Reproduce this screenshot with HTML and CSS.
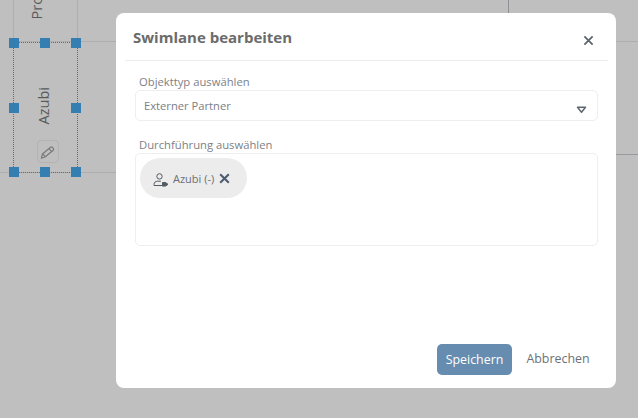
FILE: index.html
```html
<!DOCTYPE html>
<html lang="de">
<head>
<meta charset="utf-8">
<title>Swimlane bearbeiten</title>
<link rel="stylesheet" href="styles.css">
</head>
<body>
<div class="canvas">
  <div class="line v l1"></div>
  <div class="line v l2"></div>
  <div class="line v l3"></div>
  <div class="line h h1"></div>
  <div class="line h h2"></div>
  <div class="line h h3"></div>
  <div class="line h h4"></div>
  <div class="lane-label pro">Pro</div>
  <div class="selection"></div>
  <div class="lane-label azubi">Azubi</div>
  <div class="edit-btn">
    <svg width="16" height="16" viewBox="0 0 16 16" fill="none" stroke="#7a7a7a" stroke-width="1.2" stroke-linejoin="round"><path d="M2.5 10 10.5 3.2a1.3 1.3 0 0 1 1.8 0l1 1.2a1.3 1.3 0 0 1-.1 1.8L5 13l-3.6 1.2z"/><path d="M9 4.6 11.8 7.6M3 10.2l2.4 2.6"/></svg>
  </div>
  <span class="handle a1"></span><span class="handle a2"></span><span class="handle a3"></span>
  <span class="handle b1"></span><span class="handle b3"></span>
  <span class="handle c1"></span><span class="handle c2"></span><span class="handle c3"></span>
</div>
<div class="modal">
  <header class="modal-head">
    <h1 class="title">Swimlane bearbeiten</h1>
    <svg class="close" width="11" height="11" viewBox="0 0 12 12" stroke="#5f6670" stroke-width="2"><path d="M1.5 1.5 10.5 10.5M10.5 1.5 1.5 10.5"/></svg>
  </header>
  <div class="modal-body">
    <div class="field">
      <label class="label">Objekttyp auswählen</label>
      <div class="select">
        <span>Externer Partner</span>
        <span class="select-arrow">
          <svg width="11" height="8" viewBox="0 0 12 9" fill="none" stroke="#5f6670" stroke-width="1.7" stroke-linejoin="round"><path d="M1.5 1.5h9L6 7z"/></svg>
        </span>
      </div>
    </div>
    <div class="field second">
      <label class="label">Durchführung auswählen</label>
      <div class="multi">
        <div class="chip">
          <svg class="chip-icon" width="16" height="15" viewBox="0 0 16 15" fill="none" stroke="#555b63" stroke-width="1"><circle cx="6.5" cy="4.4" r="2.7"/><path d="M1 13.5v-1C1 10.4 2.6 9.2 4.5 9.2h3.4"/><path d="M1 13.5h8"/><path d="M9.5 10.5h3l2.5 1.8-2.5 1.8h-3z" fill="#555b63"/></svg>
          <span class="chip-text">Azubi (-)</span>
          <svg class="chip-x" width="11" height="11" viewBox="0 0 11 11" stroke="#4f5d70" stroke-width="2.1"><path d="M1.2 1.2 9.8 9.8M9.8 1.2 1.2 9.8"/></svg>
        </div>
      </div>
    </div>
  </div>
  <footer class="modal-foot">
    <button class="btn primary">Speichern</button>
    <button class="btn plain">Abbrechen</button>
  </footer>
</div>
</body>
</html>
```
FILE: styles.css
```css
* { box-sizing: border-box; }
html, body { margin: 0; height: 100%; }
body {
  width: 638px;
  height: 418px;
  overflow: hidden;
  background: #bfbfbf;
  font-family: "Open Sans", sans-serif;
  position: relative;
  display: flex;
  align-items: flex-start;
  justify-content: flex-start;
  padding: 13px 0 0 116px;
}
.canvas { position: absolute; inset: 0; }
.line { position: absolute; background: #aeaeae; }
.line.v { width: 1px; }
.line.h { height: 1px; }
.l1 { left: 13px; top: 0; height: 42px; }
.l2 { left: 77px; top: 0; height: 42px; }
.l3 { left: 508px; top: 0; height: 13px; width: 1px; background: #8e9296; }
.h1 { left: 14px; top: 41px; width: 102px; }
.h2 { left: 0; top: 172px; width: 116px; }
.h3 { left: 616px; top: 41px; width: 22px; }
.h4 { left: 616px; top: 154px; width: 22px; background: #969a9e; }
.lane-label {
  position: absolute;
  writing-mode: vertical-rl;
  transform: rotate(180deg);
  font-size: 14.5px;
  line-height: 16px;
  color: #5a5a5a;
  white-space: nowrap;
}
.pro { left: 29px; bottom: 399px; }
.azubi { left: 36px; top: 87px; }
.selection {
  position: absolute;
  left: 13px;
  top: 42px;
  width: 65px;
  height: 131px;
  border: 1px dotted #6a6a6a;
}
.edit-btn {
  position: absolute;
  left: 37px;
  top: 140px;
  width: 22px;
  height: 23px;
  border: 1px solid #b3b3b3;
  border-radius: 4px;
  display: flex;
  align-items: center;
  justify-content: center;
}
.handle { position: absolute; width: 10px; height: 10px; background: #357eb2; }
.a1, .b1, .c1 { left: 9px; }
.a2, .c2 { left: 40px; }
.a3, .b3, .c3 { left: 71px; }
.a1, .a2, .a3 { top: 38px; }
.b1, .b3 { top: 103px; }
.c1, .c2, .c3 { top: 167px; }

.modal {
  position: relative;
  width: 500px;
  height: 375px;
  background: #fff;
  border-radius: 8px;
  display: flex;
  flex-direction: column;
  color: #6c7178;
}
.modal-head {
  height: 48px;
  margin: 0 8px 0 9px;
  padding: 0 8px;
  border-bottom: 1px solid #ececec;
  display: flex;
  align-items: center;
  justify-content: space-between;
}
.title {
  margin: 0;
  font-size: 15px;
  font-weight: 700;
  line-height: 20px;
  color: #6b6b6b;
}
.close { position: relative; top: 4px; left: -6px; }
.modal-body {
  flex: 1;
  padding: 12px 18px 0 19px;
  display: flex;
  flex-direction: column;
}
.label {
  display: block;
  font-size: 11.25px;
  line-height: 17px;
  padding-left: 4px;
  color: #7d8187;
}
.select {
  height: 31px;
  border: 1px solid #eeeeee;
  border-radius: 5px;
  display: flex;
  align-items: center;
  justify-content: space-between;
  padding-left: 8px;
  font-size: 11.2px;
  color: #7a7e84;
}
.select-arrow {
  width: 31px;
  height: 29px;
  display: flex;
  align-items: flex-end;
  justify-content: center;
  padding-bottom: 6px;
}
.second { margin-top: 15px; }
.multi {
  height: 93px;
  border: 1px solid #eeeeee;
  border-radius: 5px;
  padding: 4px;
}
.chip {
  width: 107px;
  height: 40px;
  border-radius: 20px;
  background: #ececec;
  display: flex;
  align-items: center;
  padding-left: 13px;
  font-size: 11px;
  color: #6a6f76;
}
.chip-icon { position: relative; top: 1px; }
.chip-text { margin-left: 4px; }
.chip-x { margin-left: 5px; }
.modal-foot {
  height: 44px;
  padding: 0 18px 0 321px;
  display: flex;
  align-items: flex-start;
  gap: 7px;
}
.btn {
  font-family: inherit;
  font-size: 12.4px;
  border: 0;
  background: none;
  padding: 0;
  height: 31px;
  border-radius: 5px;
}
.primary { width: 75px; background: #668cb0; color: #fff; }
.plain { width: 78px; color: #6c7178; position: relative; top: -1px; }
```
